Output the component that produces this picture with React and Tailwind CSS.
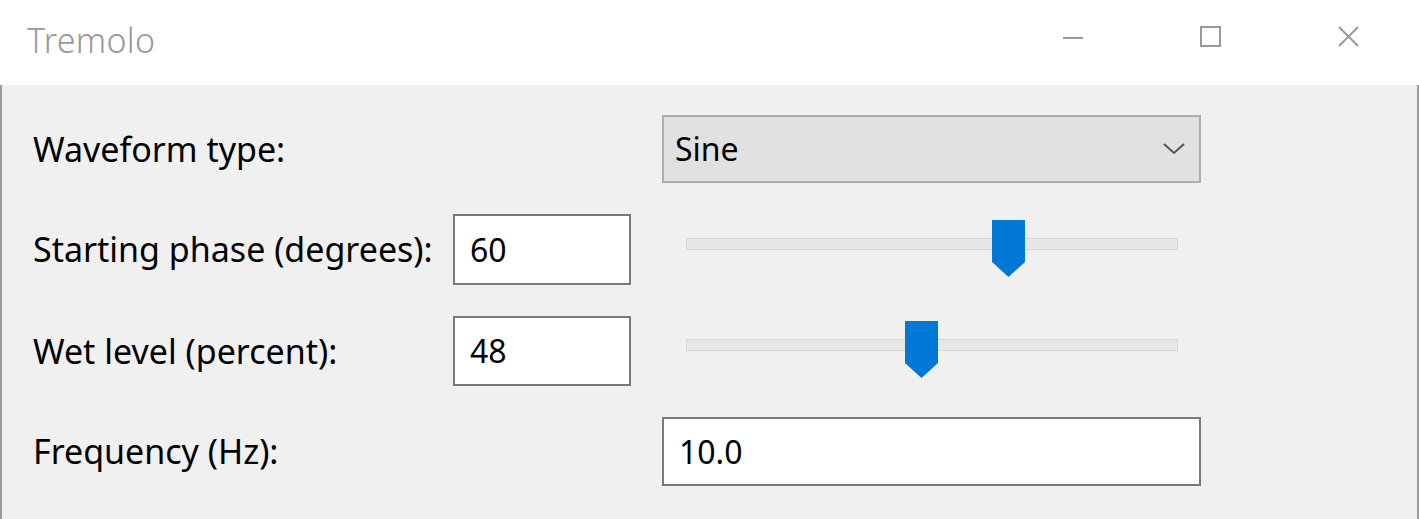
import React from 'react';

const font = { fontFamily: '"Noto Sans", "Open Sans", sans-serif' };

const Thumb = ({ left }) => (
    <svg
        className="absolute top-[-19px]"
        style={{ left }}
        width="33"
        height="57"
        viewBox="0 0 33 57"
    >
        <polygon points="0,0 33,0 33,42 16.5,57 0,42" fill="#0078d7" />
    </svg>
);

const Slider = ({ thumb }) => (
    <div className="relative ml-[55px] -mt-[12px] w-[492px] h-[12px] bg-[#e7e7e7] border border-[#d6d6d6]">
        <Thumb left={thumb} />
    </div>
);

const TextBox = ({ value, wide }) => (
    <div
        className={`${wide ? 'w-[539px]' : 'w-[178px]'} h-full bg-white border-2 border-[#7a7a7a] flex items-center px-[15px] text-[32px] text-black`}
    >
        {value}
    </div>
);

export default function App() {
    return (
        <div className="w-[1419px] h-[519px] bg-[#f0f0f0] flex flex-col overflow-hidden" style={font}>
            <div className="h-[85px] bg-white flex items-center pl-[27px] pr-[60px] shrink-0">
                <span className="text-[34px] text-[#999999] font-light tracking-[0.3px] -mt-[4px]">Tremolo</span>
                <div className="ml-auto flex items-center gap-[117px] -mt-[12px]">
                    <svg width="20" height="20" viewBox="0 0 20 20">
                        <line x1="0" y1="11" x2="20" y2="11" stroke="#999" strokeWidth="2" />
                    </svg>
                    <svg width="21" height="21" viewBox="0 0 21 21">
                        <rect x="1" y="1" width="19" height="19" fill="none" stroke="#999" strokeWidth="2" />
                    </svg>
                    <svg width="21" height="21" viewBox="0 0 21 21">
                        <path d="M1 1 L20 20 M20 1 L1 20" stroke="#999" strokeWidth="2" />
                    </svg>
                </div>
            </div>

            <div className="flex-1 flex flex-col pt-[30px] gap-[31px] pl-[31px] border-l-2 border-l-[#9c9c9c] border-r-2 border-r-[#9c9c9c] text-[34px] text-black">
                <div className="flex items-center h-[68px]">
                    <span className="w-[629px]">Waveform type:</span>
                    <div className="w-[539px] h-[68px] bg-[#e1e1e1] border-2 border-[#adadad] flex items-center pl-[11px] pr-[14px] text-[32px]">
                        <span>Sine</span>
                        <svg className="ml-auto" width="22" height="12" viewBox="0 0 22 12">
                            <polyline points="1,1 11,10 21,1" fill="none" stroke="#555" strokeWidth="2" />
                        </svg>
                    </div>
                </div>

                <div className="flex items-center h-[71px]">
                    <span className="w-[420px]">Starting phase (degrees):</span>
                    <TextBox value="60" />
                    <Slider thumb={305} />
                </div>

                <div className="flex items-center h-[70px]">
                    <span className="w-[420px]">Wet level (percent):</span>
                    <TextBox value="48" />
                    <Slider thumb={218} />
                </div>

                <div className="flex items-center h-[69px]">
                    <span className="w-[629px]">Frequency (Hz):</span>
                    <TextBox value="10.0" wide />
                </div>
            </div>
        </div>
    );
}
